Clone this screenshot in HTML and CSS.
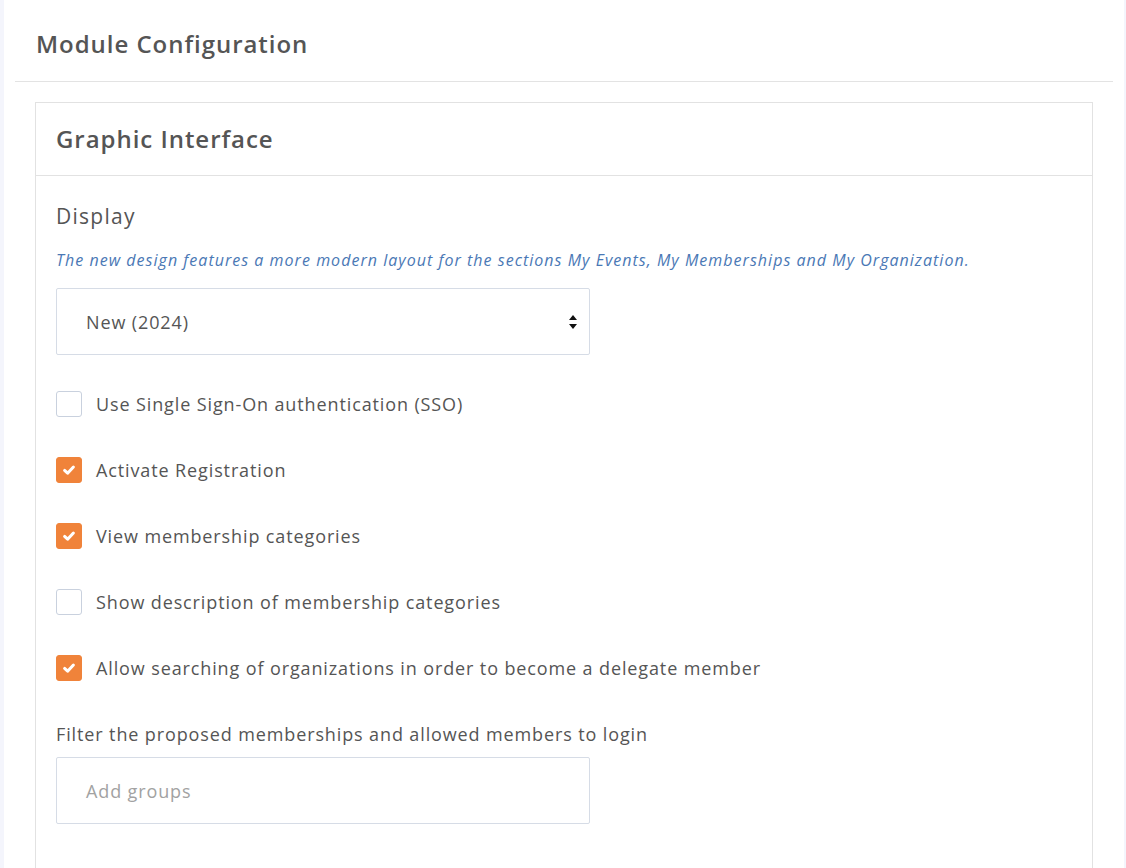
FILE: index.html
```html
<!DOCTYPE html>
<html>
<head>
<meta charset="utf-8">
<link rel="stylesheet" href="styles.css">
</head>
<body>
<div class="card">
  <div class="card-header">
    <h2>Module Configuration</h2>
  </div>
  <div class="card-body">
    <div class="panel">
      <div class="panel-header">
        <h3>Graphic Interface</h3>
      </div>
      <div class="panel-body">
        <h4 class="field-title">Display</h4>
        <p class="help">The new design features a more modern layout for the sections My Events, My Memberships and My Organization.</p>
        <div class="select">
          <span>New (2024)</span>
          <svg class="select-arrow" width="10" height="16" viewBox="0 0 10 16"><path d="M5 1 L9 6 L1 6 Z M5 15 L9 10 L1 10 Z" fill="#111"/></svg>
        </div>

        <ul class="checks">
          <li><span class="box"></span>Use Single Sign-On authentication (SSO)</li>
          <li><span class="box checked"><svg width="16" height="16" viewBox="0 0 16 16"><path d="M3.6 8.4 L6.6 11.2 L12.4 5" fill="none" stroke="#fff" stroke-width="3" stroke-linecap="round" stroke-linejoin="round"/></svg></span>Activate Registration</li>
          <li><span class="box checked"><svg width="16" height="16" viewBox="0 0 16 16"><path d="M3.6 8.4 L6.6 11.2 L12.4 5" fill="none" stroke="#fff" stroke-width="3" stroke-linecap="round" stroke-linejoin="round"/></svg></span>View membership categories</li>
          <li><span class="box"></span>Show description of membership categories</li>
          <li><span class="box checked"><svg width="16" height="16" viewBox="0 0 16 16"><path d="M3.6 8.4 L6.6 11.2 L12.4 5" fill="none" stroke="#fff" stroke-width="3" stroke-linecap="round" stroke-linejoin="round"/></svg></span>Allow searching of organizations in order to become a delegate member</li>
        </ul>

        <label class="label">Filter the proposed memberships and allowed members to login</label>
        <div class="input"><span class="placeholder">Add groups</span></div>
      </div>
    </div>
  </div>
</div>
</body>
</html>
```

FILE: styles.css
```css
html, body { margin: 0; padding: 0; }
body {
  background: #f4f5fc;
  font-family: "Open Sans", Lato, sans-serif;
  color: #555;
  letter-spacing: 0.055em;
  padding: 0 2px 0 4px;
}

.card {
  background: #fff;
  min-height: 868px;
  padding: 0 11px;
}

.card-header {
  padding: 29px 21px 22px;
  border-bottom: 1px solid #e3e3e3;
}
.card-header h2, .panel-header h3 {
  margin: 0;
  font-size: 24px;
  line-height: 30px;
  font-weight: 600;
  letter-spacing: 0.04em;
  color: #555;
}

.card-body { padding: 20px 20px 0; }

.panel {
  border: 1px solid #e2e2e2;
  border-bottom: none;
  min-height: 780px;
}
.panel-header {
  padding: 21px 20px;
  border-bottom: 1px solid #e2e2e2;
}
.panel-body { padding: 26px 20px 0; }

.field-title {
  margin: 0;
  font-size: 21px;
  line-height: 28px;
  font-weight: 400;
  letter-spacing: 0.06em;
  color: #555;
}
.help {
  margin: 19px 0 0;
  font-size: 16px;
  line-height: 22px;
  font-style: italic;
  letter-spacing: 0.064em;
  color: #4a78b5;
}

.select, .input {
  height: 65px;
  border: 1px solid #d6dce6;
  border-radius: 2px;
  display: flex;
  align-items: center;
  padding: 0 11px 0 29px;
  box-sizing: content-box;
  width: 492px;
  font-size: 18px;
}
.select { margin-top: 17px; justify-content: space-between; }
.select-arrow { display: block; }

.checks {
  list-style: none;
  margin: 36px 0 0;
  padding: 0;
  display: flex;
  flex-direction: column;
  gap: 40px;
}
.checks li {
  display: flex;
  align-items: center;
  gap: 14px;
  height: 26px;
  font-size: 18px;
}
.box {
  width: 24px;
  height: 24px;
  border: 1px solid #c9d1de;
  border-radius: 3px;
  display: flex;
  align-items: center;
  justify-content: center;
  flex-shrink: 0;
}
.box.checked {
  background: #f0833a;
  border-color: #f0833a;
}

.label {
  display: block;
  margin-top: 40px;
  font-size: 18px;
  line-height: 26px;
}
.input { margin-top: 10px; }
.placeholder { color: #a2a2a2; }
```
